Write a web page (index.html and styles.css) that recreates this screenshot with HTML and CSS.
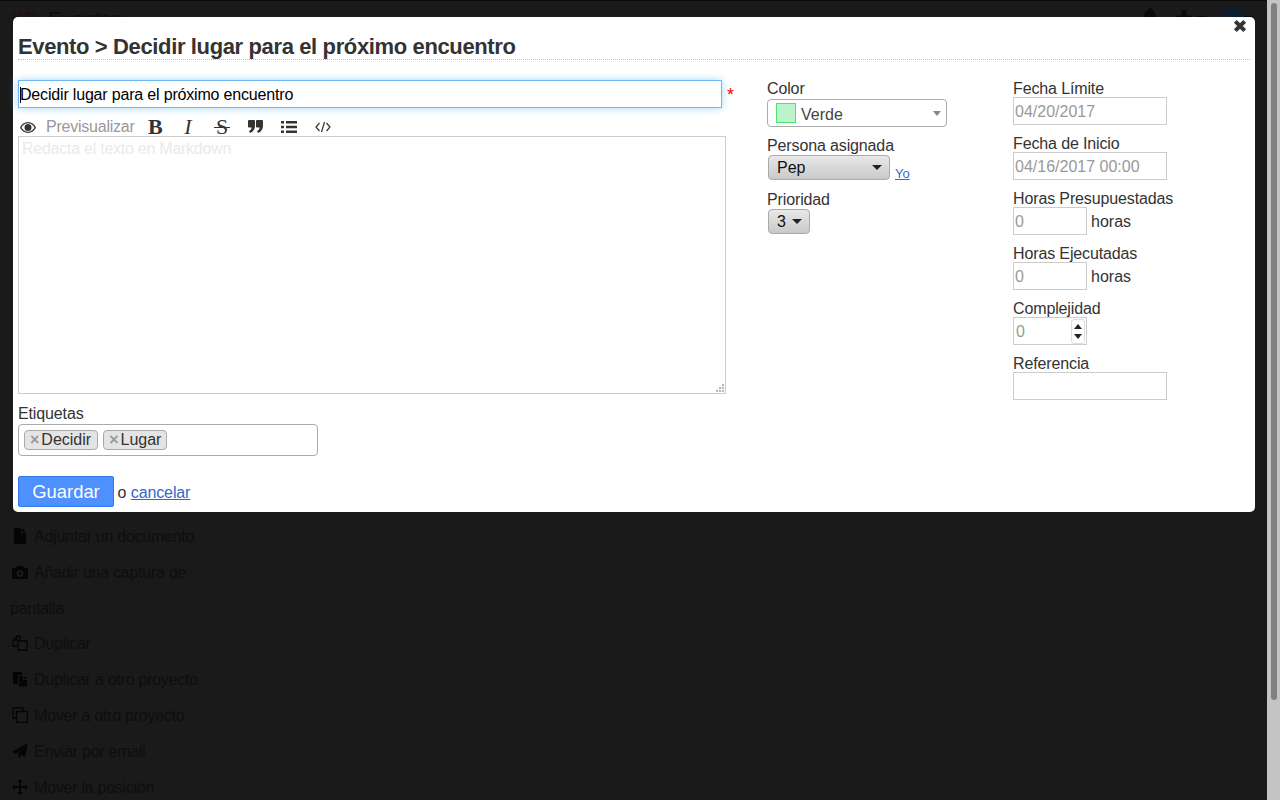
FILE: index.html
```html
<!DOCTYPE html>
<html lang="es">

<head>
    <meta charset="UTF-8">
    <title>Evento</title>
    <link rel="stylesheet" href="styles.css">
</head>

<body>
    <!-- pagina de fondo, oscurecida por el modal -->
    <header class="topbar">
        <div class="brand"><span class="brand-kb">KB</span> Eventos</div>
        <div class="topbar-icons">
            <svg class="top-bell" viewBox="0 0 16 18"><path d="M8 0a2 2 0 0 1 2 2c3 1 3 4 3 6 0 3 1 5 3 6v1H0v-1c2-1 3-3 3-6 0-2 0-5 3-6a2 2 0 0 1 2-2zM6 16h4a2 2 0 0 1-4 0z"/></svg>
            <svg class="top-plus" viewBox="0 0 14 14"><path d="M5 0h4v5h5v4H9v5H5V9H0V5h5z"/></svg>
            <span class="top-caret caret-plus"></span>
            <span class="top-avatar"></span>
            <span class="top-caret"></span>
        </div>
    </header>

    <ul class="side-menu">
        <li><svg viewBox="0 0 16 16"><path d="M2 0h7v5h5v11H2zM10 0l4 4h-4z"/></svg>Adjuntar un documento</li>
        <li><svg viewBox="0 0 16 16"><path fill-rule="evenodd" d="M5 2h6l1 2h3a1 1 0 0 1 1 1v9a1 1 0 0 1-1 1H1a1 1 0 0 1-1-1V5a1 1 0 0 1 1-1h3zM8 6a3.500 3.500 0 1 0 0 7 3.500 3.500 0 0 0 0-7zm0 2a1.500 1.500 0 1 1 0 3 1.500 1.500 0 0 1 0-3z"/></svg>Añadir una captura de pantalla</li>
        <li><svg class="line" viewBox="0 0 16 16"><path d="M5 1h3v4M5 1L1 5v6h5M6 6h9v9H6zM5 1v4H1"/></svg>Duplicar</li>
        <li><svg viewBox="0 0 16 16"><path d="M1 1h9v3H6v9H1zM7 5h4v4h4v6.500H7zM12 5l3 3h-3z"/></svg>Duplicar a otro proyecto</li>
        <li><svg class="line" viewBox="0 0 16 16"><path d="M11 4V1H1v10h3M4.500 4.500h11v11h-11z"/></svg>Mover a otro proyecto</li>
        <li><svg viewBox="0 0 16 16"><path d="M16 0l-3 14-4-2-2 4-1-6zM16 0L0 9l4 2z"/></svg>Enviar por email</li>
        <li><svg viewBox="0 0 16 16"><path d="M8 0l3 3H9v4h4V5l3 3-3 3V9H9v4h2l-3 3-3-3h2V9H3v2L0 8l3-3v2h4V3H5z"/></svg>Mover la posición</li>
    </ul>

    <div class="modal">
        <svg class="modal-close" viewBox="0 0 12 12"><path d="M2.500 2.500l7 7M9.500 2.500l-7 7"/></svg>
        <h2 class="modal-title">Evento &gt; Decidir lugar para el próximo encuentro</h2>

        <form class="task-form">
            <div class="col-main">
                <div class="title-row">
                    <input class="title-input" type="text" value="Decidir lugar para el próximo encuentro">
                    <span class="required">*</span>
                </div>

                <div class="md-toolbar">
                    <svg class="tool-eye" viewBox="0 0 16 11"><path fill-rule="evenodd" d="M8 0c3.500 0 6.500 2.200 8 5.500C14.500 8.800 11.500 11 8 11S1.500 8.800 0 5.500C1.500 2.200 4.500 0 8 0zm0 1.300c-2.800 0-5.200 1.700-6.500 4.200C2.800 8 5.200 9.700 8 9.700s5.200-1.700 6.500-4.200C13.200 3 10.800 1.300 8 1.300zM8 2a3.500 3.500 0 1 1 0 7 3.500 3.500 0 0 1 0-7z"/></svg>
                    <span class="tool-preview">Previsualizar</span>
                    <span class="tool-b">B</span>
                    <span class="tool-i">I</span>
                    <span class="tool-s">S</span>
                    <svg class="tool-quote" viewBox="0 0 15 13"><path d="M1 0h5a1 1 0 0 1 1 1v5c0 3-2 6-5 7l-1-2c2-1 2.500-2 2.500-3.500H1a1 1 0 0 1-1-1V1a1 1 0 0 1 1-1zM9 0h5a1 1 0 0 1 1 1v5c0 3-2 6-5 7l-1-2c2-1 2.500-2 2.500-3.500H9a1 1 0 0 1-1-1V1a1 1 0 0 1 1-1z"/></svg>
                    <svg class="tool-list" viewBox="0 0 16 12"><path d="M0 0h3v2.500H0zM5 0h11v2.500H5zM0 4.700h3v2.500H0zM5 4.700h11v2.500H5zM0 9.500h3V12H0zM5 9.500h11V12H5z"/></svg>
                    <svg class="tool-code" viewBox="0 0 16 12"><path d="M4.500 2L1 6l3.500 4M11.500 2L15 6l-3.500 4M9.500 1L6.500 11"/></svg>
                </div>

                <div class="md-wrap">
                    <textarea class="md-text" placeholder="Redacta el texto en Markdown"></textarea>
                    <svg class="md-grip" viewBox="0 0 10 10"><path d="M7 1h2v2H7zM4 4h2v2H4zM7 4h2v2H7zM1 7h2v2H1zM4 7h2v2H4zM7 7h2v2H7z"/></svg>
                </div>

                <label class="field-label tags-label">Etiquetas</label>
                <div class="tags-box">
                    <span class="tag"><span class="tag-x">×</span>Decidir</span>
                    <span class="tag"><span class="tag-x">×</span>Lugar</span>
                </div>

                <div class="form-actions">
                    <button class="btn-save" type="button">Guardar</button>
                    o <a href="#">cancelar</a>
                </div>
            </div>

            <div class="col-mid">
                <label class="field-label">Color</label>
                <div class="color-select">
                    <span class="swatch"></span>
                    <span class="color-name">Verde</span>
                    <span class="color-arrow"></span>
                </div>

                <label class="field-label">Persona asignada</label>
                <div class="assignee-row">
                    <div class="drop-btn assignee">Pep<span class="drop-caret"></span></div>
                    <a class="me-link" href="#">Yo</a>
                </div>

                <label class="field-label">Prioridad</label>
                <div class="drop-btn priority">3<span class="drop-caret"></span></div>
            </div>

            <div class="col-side">
                <label class="field-label">Fecha Límite</label>
                <input class="side-input" type="text" value="04/20/2017">

                <label class="field-label">Fecha de Inicio</label>
                <input class="side-input" type="text" value="04/16/2017 00:00">

                <label class="field-label">Horas Presupuestadas</label>
                <div class="hours-row"><input class="side-input short" type="text" value="0"> horas</div>

                <label class="field-label">Horas Ejecutadas</label>
                <div class="hours-row"><input class="side-input short" type="text" value="0"> horas</div>

                <label class="field-label">Complejidad</label>
                <div class="spin-box">
                    <span>0</span>
                    <span class="spinner"><i class="spin-up"></i><i class="spin-down"></i></span>
                </div>

                <label class="field-label">Referencia</label>
                <input class="side-input" type="text">
            </div>
        </form>
    </div>

    <div class="scrollbar"><div class="scroll-thumb"></div></div>
</body>

</html>
```

FILE: styles.css
```css
* {
    box-sizing: border-box;
}

html,
body {
    height: 800px;
    overflow: hidden;
}

body {
    margin: 0;
    background: #1a1a1a;
    color: #0e0e0e;
    font-family: "Liberation Sans", Arial, sans-serif;
    font-size: 16px;
    border-top: 1px solid #0a0a0a;
}

/* fondo */
.topbar {
    display: flex;
    justify-content: space-between;
    align-items: center;
    height: 36px;
    padding: 0 13px 0 11px;
    width: 1267px;
}

.brand {
    font-size: 20.500px;
    margin-top: -1px;
}

.brand-kb {
    color: #260d0d;
    margin-right: 4px;
}

.topbar-icons {
    display: flex;
    align-items: center;
    margin-top: -2px;
}

.topbar-icons svg {
    fill: #0a0a0a;
}

.top-bell {
    width: 18px;
    height: 22px;
    margin-right: 17px;
}

.top-plus {
    width: 16px;
    height: 16px;
    margin-right: 5px;
}

.top-caret {
    border-top: 5px solid #0a0a0a;
    border-left: 5px solid transparent;
    border-right: 5px solid transparent;
}

.top-avatar {
    width: 22px;
    height: 22px;
    border-radius: 50%;
    background: #0c1d2e;
    margin-left: 14px;
    margin-right: 1px;
}

.side-menu {
    list-style: none;
    margin: 482px 0 0;
    padding: 0 0 0 10px;
    width: 200px;
    line-height: 35.800px;
    letter-spacing: -0.25px;
    color: #0e0e0e;
}

.side-menu svg {
    width: 16px;
    height: 16px;
    margin: 0 6px 0 2px;
    vertical-align: -2px;
    fill: #050505;
}

.side-menu svg.line {
    fill: none;
    stroke: #050505;
    stroke-width: 1.300;
}

/* modal */
.modal {
    position: absolute;
    left: 13px;
    top: 17px;
    width: 1242px;
    height: 495px;
    padding: 5px;
    background: #fff;
    border-radius: 5px;
    color: #333;
}

.modal-close {
    position: absolute;
    right: 7px;
    top: 1px;
    width: 16px;
    height: 16px;
    fill: none;
    stroke: #333;
    stroke-width: 3;
}

.modal-title {
    margin: 0 0 20px;
    padding-top: 13px;
    font-size: 22px;
    line-height: 24px;
    letter-spacing: -0.37px;
    font-weight: bold;
    color: #333;
    border-bottom: 1px dotted #bbb;
}

.task-form {
    display: grid;
    grid-template-columns: 749px 246px 1fr;
}

.field-label {
    display: block;
    line-height: 17px;
    letter-spacing: -0.13px;
    color: #333;
}

.title-row {
    display: flex;
    align-items: flex-start;
}

/* el cursor de texto se pinta como fondo para que salga siempre */
.title-input {
    width: 704px;
    height: 28px;
    padding: 2px 1px 0;
    border: 1px solid #6db7f5;
    outline: none;
    box-shadow: 0 0 8px #a6d6fb;
    background: #fff linear-gradient(#000, #000) 1px 6px / 1px 16px no-repeat;
    font: 16px "Liberation Sans", Arial, sans-serif;
    letter-spacing: -0.18px;
    color: #000;
}

.required {
    height: 28px;
    margin-left: 5px;
    color: #f00;
    font-size: 18px;
    line-height: 30px;
}

.md-toolbar {
    display: flex;
    align-items: center;
    height: 28px;
    padding-top: 9px;
    color: #333;
}

.tool-eye {
    width: 16px;
    height: 11px;
    margin: 1px 10px 0 2px;
    fill: #333;
}

.tool-preview {
    color: #999;
    width: 102px;
    letter-spacing: -0.23px;
}

.tool-b,
.tool-i,
.tool-s {
    font-family: "Liberation Serif", "Times New Roman", serif;
    font-size: 22px;
    line-height: 20px;
    text-align: center;
}

.tool-b {
    font-weight: bold;
    width: 14px;
    margin-right: 20px;
}

.tool-i {
    font-style: italic;
    width: 12px;
    margin-right: 20px;
}

.tool-s {
    position: relative;
    width: 16px;
    margin-right: 18px;
}

.tool-s::after {
    content: "";
    position: absolute;
    left: 0;
    right: 0;
    top: 10px;
    height: 1px;
    background: #333;
}

.tool-quote {
    width: 15px;
    height: 13px;
    margin-right: 18px;
    fill: #333;
}

.tool-list {
    width: 16px;
    height: 12px;
    margin-right: 18px;
    fill: #333;
}

.tool-code {
    width: 16px;
    height: 12px;
    fill: none;
    stroke: #333;
    stroke-width: 1.200;
}

.md-wrap {
    position: relative;
    width: 708px;
    height: 258px;
}

.md-text {
    display: block;
    width: 708px;
    height: 258px;
    margin: 0;
    padding: 3px;
    border: 1px solid #ccc;
    outline: none;
    resize: none;
    font: 16px "Liberation Sans", Arial, sans-serif;
    letter-spacing: -0.25px;
}

.md-text::placeholder {
    color: #eaeaea;
    opacity: 1;
}

.md-grip {
    position: absolute;
    right: 1px;
    bottom: 1px;
    width: 10px;
    height: 10px;
    fill: #b5b5b5;
}

.tags-label {
    margin-top: 11px;
}

.tags-box {
    display: flex;
    gap: 5px;
    width: 300px;
    height: 32px;
    margin-top: 2px;
    padding: 5px;
    border: 1px solid #aaa;
    border-radius: 4px;
}

.tag {
    height: 20px;
    padding: 0 5px;
    background: #e4e4e4;
    border: 1px solid #aaa;
    border-radius: 4px;
    line-height: 17px;
    color: #333;
}

.tag:first-child {
    padding-right: 6px;
}

.tag-x {
    color: #999;
    font-weight: bold;
    margin-right: 2px;
}

.form-actions {
    margin-top: 20px;
    line-height: 33px;
    white-space: nowrap;
}

.btn-save {
    width: 96px;
    height: 31px;
    margin-right: -1px;
    padding: 0;
    background: #4d90fe;
    border: 1px solid #3079ed;
    border-radius: 2px;
    color: #fff;
    font: 18.400px "Liberation Sans", Arial, sans-serif;
    vertical-align: top;
}

a {
    color: #36c;
}

.form-actions a {
    letter-spacing: -0.12px;
}

.color-select {
    display: flex;
    align-items: center;
    width: 180px;
    height: 28px;
    margin: 2px 0 10px;
    padding-left: 8px;
    border: 1px solid #aaa;
    border-radius: 4px;
    color: #444;
}

.swatch {
    width: 20px;
    height: 20px;
    margin-right: 5px;
    background: #bdf4cb;
    border: 1px solid #4ae371;
}

.color-name {
    padding-top: 4px;
}

.color-arrow {
    margin-left: auto;
    margin-right: 5px;
    border-top: 5px solid #888;
    border-left: 4px solid transparent;
    border-right: 4px solid transparent;
}

.drop-btn {
    display: flex;
    align-items: center;
    justify-content: space-between;
    height: 25px;
    margin: 1px 0 0 1px;
    background: linear-gradient(#e8e8e8, #c9c9c9);
    border: 1px solid #aaa;
    border-radius: 4px;
    color: #111;
}

.drop-caret {
    border-top: 5px solid #222;
    border-left: 5px solid transparent;
    border-right: 5px solid transparent;
}

.assignee {
    width: 122px;
    padding: 0 7px 0 8px;
}

.priority {
    width: 42px;
    padding: 0 7px 0 8px;
}

.assignee-row {
    display: flex;
    align-items: flex-end;
    margin-bottom: 11px;
}

.me-link {
    font-size: 13px;
    margin-left: 5px;
    line-height: 18px;
    margin-bottom: -3px;
}

.side-input {
    display: block;
    width: 154px;
    height: 28px;
    margin: 0 0 10px;
    padding: 2px 1px 0;
    border: 1px solid #ccc;
    outline: none;
    font: 16px "Liberation Sans", Arial, sans-serif;
    color: #999;
}

.side-input.short {
    width: 74px;
    margin: 0 4px 0 0;
}

.hours-row {
    display: flex;
    align-items: flex-start;
    height: 28px;
    margin-bottom: 10px;
    color: #333;
    line-height: 30px;
}

.spin-box {
    display: flex;
    justify-content: space-between;
    align-items: center;
    width: 74px;
    height: 28px;
    margin-bottom: 10px;
    padding: 2px 1px 0 2px;
    border: 1px solid #ccc;
    color: #999;
}

.spinner {
    display: flex;
    flex-direction: column;
    justify-content: space-between;
    align-items: center;
    width: 14px;
    height: 25px;
    margin-top: -2px;
    padding: 4px 0;
    border: 1px solid #ddd;
    border-radius: 3px;
}

.spin-up {
    border-bottom: 5px solid #222;
    border-left: 4px solid transparent;
    border-right: 4px solid transparent;
}

.spin-down {
    border-top: 5px solid #222;
    border-left: 4px solid transparent;
    border-right: 4px solid transparent;
}

/* barra de scroll dibujada */
.scrollbar {
    position: absolute;
    right: 0;
    top: 0;
    width: 13px;
    height: 800px;
    background: #c3c5c3;
}

.scroll-thumb {
    width: 6px;
    height: 697px;
    margin: 3px 0 0 4px;
    background: #7f807f;
    border-radius: 3px;
}
```
